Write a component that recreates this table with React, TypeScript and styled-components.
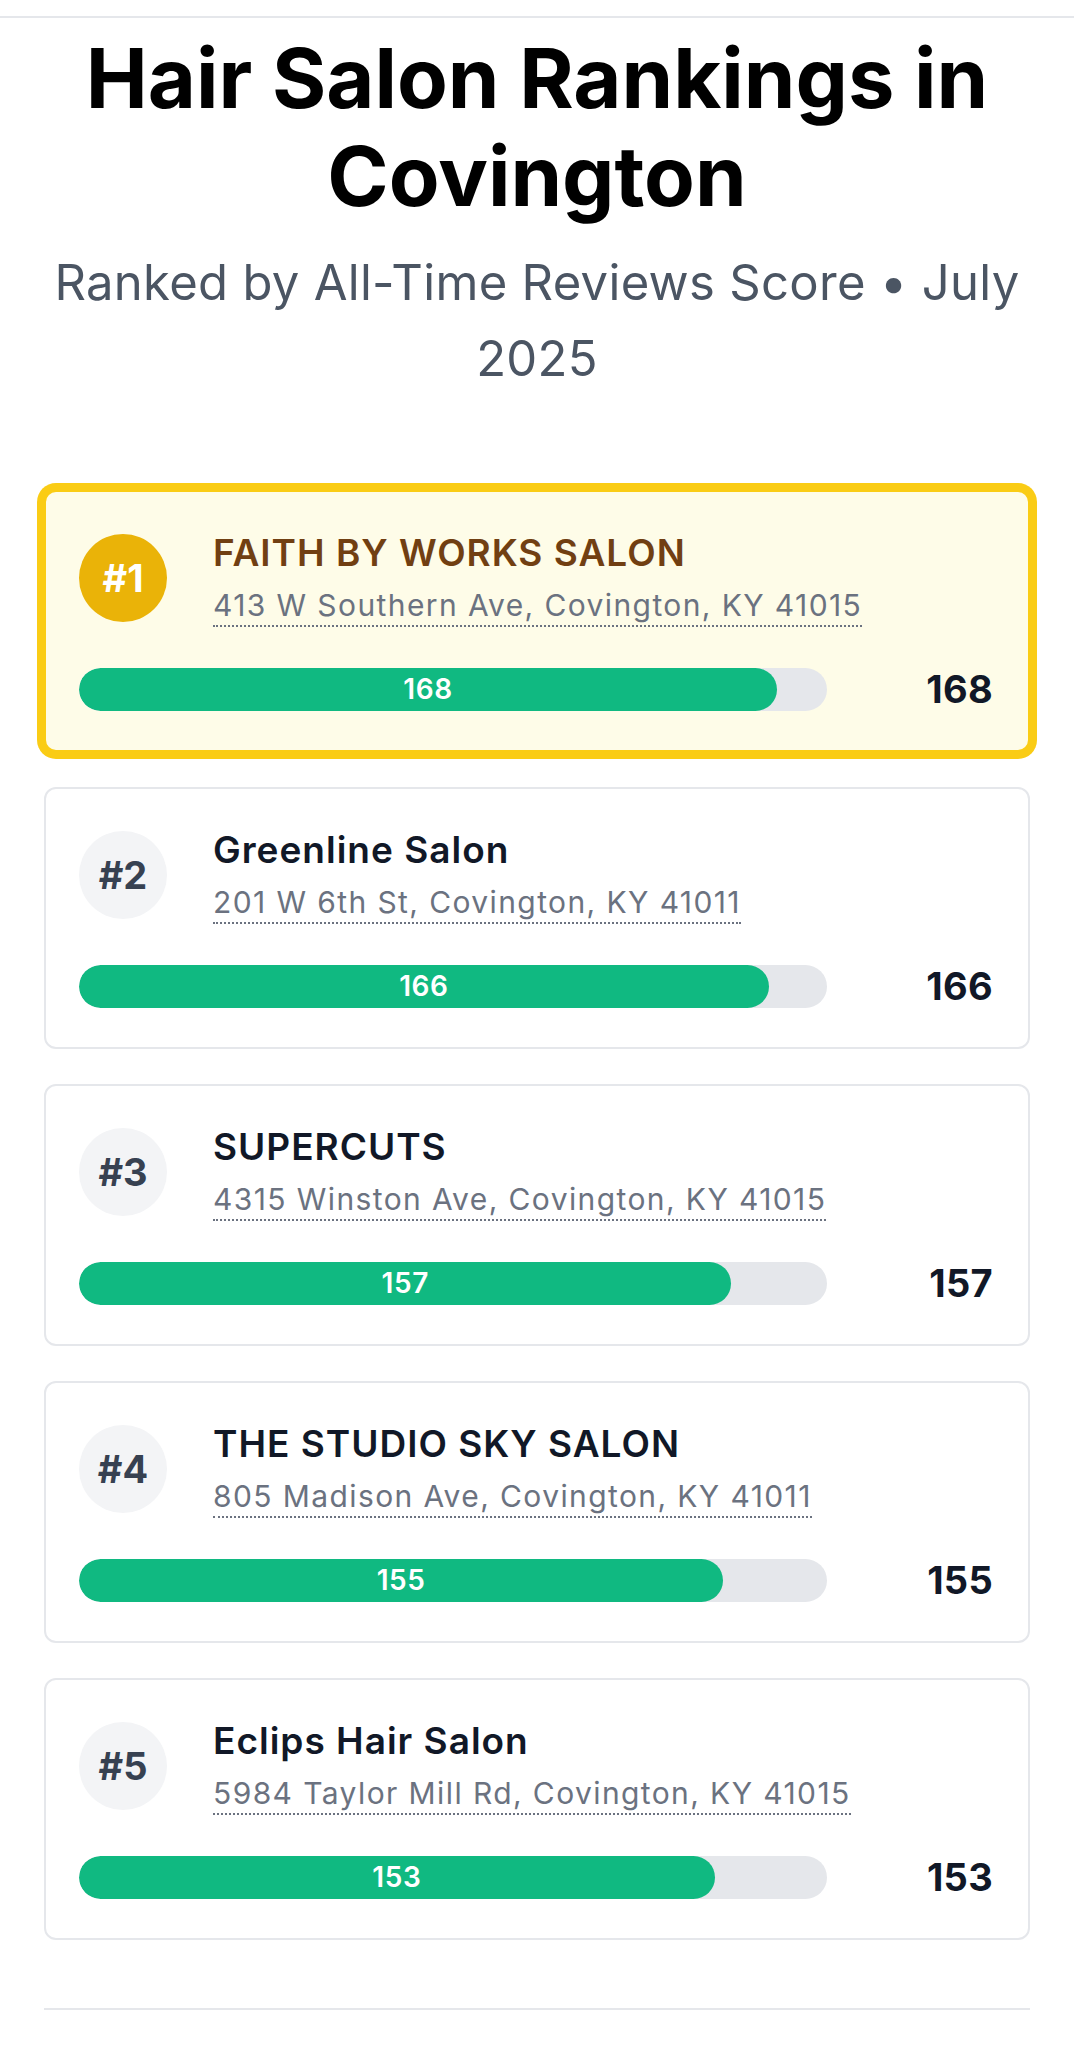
import React from "react";
import styled, { createGlobalStyle, css } from "styled-components";

const GlobalStyle = createGlobalStyle`
  * { box-sizing: border-box; }
  body {
    margin: 0;
    background: #ffffff;
    font-family: Inter, "Noto Sans", Roboto, sans-serif;
    color: #111827;
  }
`;

const Page = styled.div`
  display: flex;
  flex-direction: column;
  align-items: stretch;
`;

const TopRule = styled.div`
  margin-top: 16px;
  height: 2px;
  background: #e5e7eb;
`;

const Container = styled.main`
  padding: 0 44px;
  display: flex;
  flex-direction: column;
`;

const Header = styled.header`
  display: flex;
  flex-direction: column;
  align-items: center;
  text-align: center;
  padding-top: 11px;
`;

const Title = styled.h1`
  margin: 0;
  font-size: 83px;
  line-height: 98px;
  font-weight: 700;
  color: #000000;
  letter-spacing: 0;
`;

const Subtitle = styled.p`
  margin: 20px 0 0;
  font-size: 49px;
  line-height: 76px;
  font-weight: 400;
  color: #4b5563;
  letter-spacing: 0.3px;
`;

const List = styled.ol`
  list-style: none;
  margin: 93px 0 0;
  padding: 0;
  display: flex;
  flex-direction: column;
  gap: 35px;
`;

const Card = styled.li<{ $top?: boolean }>`
  height: 262px;
  border-radius: 12px;
  border: 2px solid #e5e7eb;
  background: #ffffff;
  padding: 37px 32px 38px 33px;
  display: flex;
  flex-direction: column;
  justify-content: space-between;
  ${(p) =>
    p.$top &&
    css`
      border-color: #facc15;
      background: #fefce8;
      box-shadow: 0 0 0 7px #facc15;
    `}
`;

const HeadRow = styled.div`
  display: flex;
  align-items: center;
  gap: 46px;
`;

const Badge = styled.div<{ $top?: boolean }>`
  width: 88px;
  height: 88px;
  flex: none;
  border-radius: 50%;
  display: flex;
  align-items: center;
  justify-content: center;
  font-size: 38px;
  font-weight: 700;
  background: ${(p) => (p.$top ? "#eab308" : "#f3f4f6")};
  color: ${(p) => (p.$top ? "#ffffff" : "#374151")};
`;

const Info = styled.div`
  display: flex;
  flex-direction: column;
  align-items: flex-start;
  gap: 8px;
`;

const Name = styled.div<{ $top?: boolean }>`
  font-size: 37px;
  line-height: 48px;
  font-weight: 600;
  letter-spacing: 1px;
  color: ${(p) => (p.$top ? "#713f12" : "#111827")};
`;

const Address = styled.span`
  font-size: 30px;
  line-height: 40px;
  letter-spacing: 1.4px;
  color: #6b7280;
  border-bottom: 2px dotted #6b7280;
`;

const BarRow = styled.div`
  display: flex;
  align-items: center;
`;

const Track = styled.div`
  flex: none;
  width: 748px;
  height: 43px;
  border-radius: 999px;
  background: #e5e7eb;
  overflow: hidden;
`;

const Fill = styled.div`
  height: 100%;
  border-radius: 999px;
  background: #10b981;
  display: flex;
  align-items: center;
  justify-content: center;
  color: #ffffff;
  font-size: 28px;
  font-weight: 600;
  letter-spacing: 0.6px;
`;

const Score = styled.div`
  flex: 1;
  text-align: right;
  padding-right: 3px;
  font-size: 38px;
  font-weight: 700;
  letter-spacing: 0.3px;
  color: #111827;
`;

const BottomRule = styled.hr`
  margin: 68px 0 0;
  border: none;
  height: 2px;
  background: #e5e7eb;
`;

const salons = [
  { name: "FAITH BY WORKS SALON", address: "413 W Southern Ave, Covington, KY 41015", score: 168 },
  { name: "Greenline Salon", address: "201 W 6th St, Covington, KY 41011", score: 166 },
  { name: "SUPERCUTS", address: "4315 Winston Ave, Covington, KY 41015", score: 157 },
  { name: "THE STUDIO SKY SALON", address: "805 Madison Ave, Covington, KY 41011", score: 155 },
  { name: "Eclips Hair Salon", address: "5984 Taylor Mill Rd, Covington, KY 41015", score: 153 },
];

const MAX = 180;

export default function App() {
  return (
    <Page>
      <GlobalStyle />
      <TopRule />
      <Container>
        <Header>
          <Title>
            Hair Salon Rankings in
            <br />
            Covington
          </Title>
          <Subtitle>
            Ranked by All-Time Reviews Score • July
            <br />
            2025
          </Subtitle>
        </Header>
        <List>
          {salons.map((s, i) => {
            const top = i === 0;
            return (
              <Card key={s.name} $top={top}>
                <HeadRow>
                  <Badge $top={top}>#{i + 1}</Badge>
                  <Info>
                    <Name $top={top}>{s.name}</Name>
                    <Address>{s.address}</Address>
                  </Info>
                </HeadRow>
                <BarRow>
                  <Track>
                    <Fill style={{ width: `${(s.score / MAX) * 100}%` }}>{s.score}</Fill>
                  </Track>
                  <Score>{s.score}</Score>
                </BarRow>
              </Card>
            );
          })}
        </List>
        <BottomRule />
      </Container>
    </Page>
  );
}
